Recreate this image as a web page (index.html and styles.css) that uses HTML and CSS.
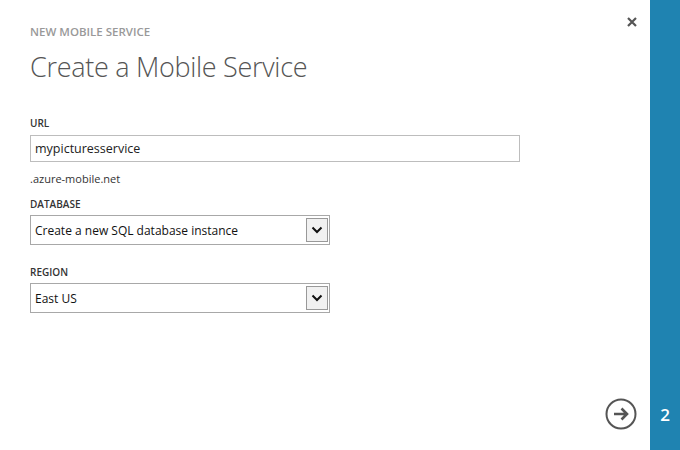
FILE: index.html
```html
<!DOCTYPE html>
<html>
<head>
<meta charset="utf-8">
<link rel="stylesheet" href="styles.css">
</head>
<body>
<div class="dialog">
  <main class="content">
    <div class="kicker">NEW MOBILE SERVICE</div>
    <h1 class="title">Create a Mobile Service</h1>
    <div class="field">
      <div class="label">URL</div>
      <div class="textbox">mypicturesservice</div>
      <div class="suffix">.azure-mobile.net</div>
    </div>
    <div class="field">
      <div class="label">DATABASE</div>
      <div class="select">
        <span class="select-text">Create a new SQL database instance</span>
        <span class="select-btn"><svg width="12" height="8" viewBox="0 0 12 8"><path d="M1.5 1.5 L6 6 L10.5 1.5" fill="none" stroke="#111" stroke-width="2"/></svg></span>
      </div>
    </div>
    <div class="field">
      <div class="label">REGION</div>
      <div class="select">
        <span class="select-text">East US</span>
        <span class="select-btn"><svg width="12" height="8" viewBox="0 0 12 8"><path d="M1.5 1.5 L6 6 L10.5 1.5" fill="none" stroke="#111" stroke-width="2"/></svg></span>
      </div>
    </div>
    <button class="close" aria-label="Close"><svg width="10" height="10" viewBox="0 0 10 10"><path d="M1 1 L9 9 M9 1 L1 9" stroke="#555" stroke-width="2.2"/></svg></button>
    <button class="next" aria-label="Next"><svg width="32" height="32" viewBox="0 0 32 32"><circle cx="16" cy="16" r="14.5" fill="none" stroke="#555" stroke-width="2"/><path d="M9 16 H22 M16.5 10.5 L22 16 L16.5 21.5" fill="none" stroke="#555" stroke-width="2.6"/></svg></button>
  </main>
  <aside class="steps">
    <span class="step">2</span>
  </aside>
</div>
</body>
</html>
```
FILE: styles.css
```css
html, body {
  margin: 0;
  padding: 0;
  background: #fff;
}
body {
  font-family: "Open Sans", "Noto Sans", sans-serif;
  color: #333;
}
.dialog {
  display: flex;
  width: 680px;
  height: 450px;
}
.content {
  position: relative;
  flex: 1;
  padding: 25px 0 0 30px;
}
.kicker {
  font-size: 11.5px;
  font-weight: 600;
  color: #999;
  line-height: 14px;
}
.title {
  margin: 10px 0 0;
  font-size: 27px;
  font-weight: 300;
  color: #555;
  line-height: 36px;
  letter-spacing: -0.3px;
}
.title + .field {
  margin-top: 31px;
}
.label {
  font-size: 10px;
  font-weight: 600;
  color: #333;
  line-height: 14px;
}
.textbox {
  margin-top: 5px;
  height: 25px;
  border: 1px solid #bdbdbd;
  font-size: 12.5px;
  line-height: 25px;
  padding-left: 4px;
  width: 484px;
  color: #222;
}
.suffix {
  font-size: 11px;
  line-height: 14px;
  margin-top: 10px;
  color: #333;
}
.field + .field {
  margin-top: 11px;
}
.field + .field + .field {
  margin-top: 20px;
}
.select {
  margin-top: 4px;
  height: 28px;
  border: 1px solid #a8a8a8;
  display: flex;
  align-items: center;
  justify-content: space-between;
  padding: 0 1px 0 4px;
  width: 293px;
}
.select-text {
  font-size: 12px;
  color: #111;
}
.select-btn {
  width: 20px;
  height: 22px;
  border: 1px solid #999;
  background: #f1f1f1;
  display: flex;
  align-items: center;
  justify-content: center;
}
.close {
  position: absolute;
  top: 15px;
  right: 13px;
  border: 0;
  background: none;
  padding: 0;
  width: 10px;
  height: 10px;
}
.next {
  position: absolute;
  right: 13px;
  bottom: 20px;
  border: 0;
  background: none;
  padding: 0;
  width: 32px;
  height: 32px;
}
.steps {
  width: 30px;
  background: #1f83b1;
  display: flex;
  flex-direction: column;
  justify-content: flex-end;
  align-items: center;
  padding-bottom: 25px;
  box-sizing: border-box;
}
.step {
  color: #fff;
  font-size: 17px;
  font-weight: 600;
  font-family: "Open Sans", sans-serif;
  line-height: 20px;
}
```
